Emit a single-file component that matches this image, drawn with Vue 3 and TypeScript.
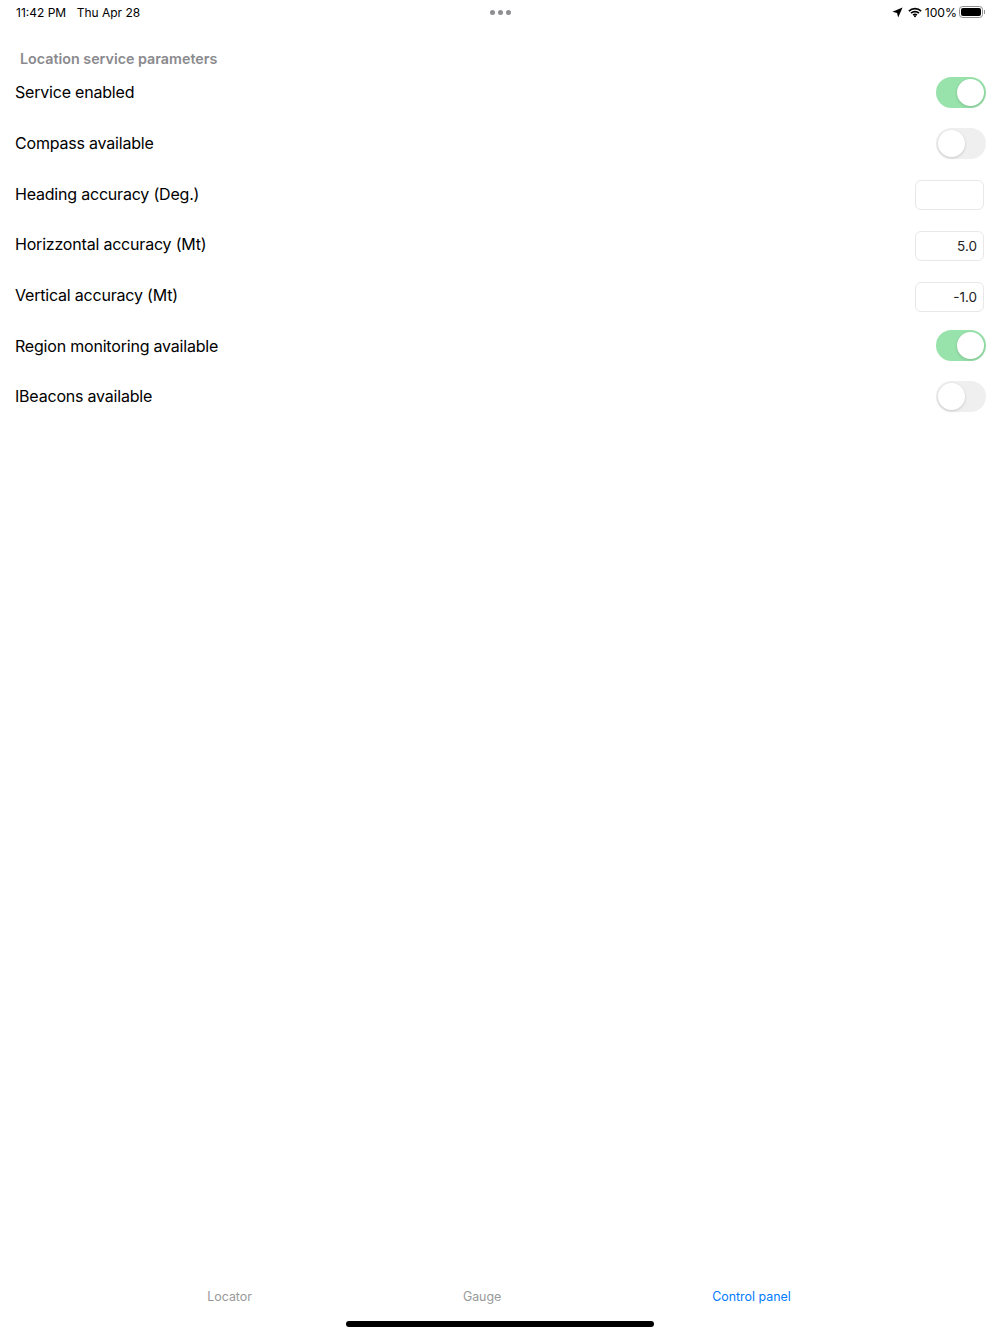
<script setup lang="ts">
type Row = { label: string; kind: 'switch' | 'field'; on?: boolean; value?: string }
const rows: Row[] = [
  { label: 'Service enabled', kind: 'switch', on: true },
  { label: 'Compass available', kind: 'switch', on: false },
  { label: 'Heading accuracy (Deg.)', kind: 'field', value: '' },
  { label: 'Horizzontal accuracy (Mt)', kind: 'field', value: '5.0' },
  { label: 'Vertical accuracy (Mt)', kind: 'field', value: '-1.0' },
  { label: 'Region monitoring available', kind: 'switch', on: true },
  { label: 'IBeacons available', kind: 'switch', on: false },
]
const tabs = ['Locator', 'Gauge', 'Control panel']
</script>

<template>
  <div class="screen">
    <header class="status">
      <div class="status-left">
        <span>11:42 PM</span>
        <span>Thu Apr 28</span>
      </div>
      <div class="dots"><i></i><i></i><i></i></div>
      <div class="status-right">
        <svg class="arrow" width="11" height="11" viewBox="0 0 10 10"><path d="M9.6.4 5.6 9.6 4.6 5.4.4 4.4Z" fill="#000"/></svg>
        <svg class="wifi" width="14" height="11" viewBox="0 0 14 10" fill="none" stroke="#000" stroke-width="1.7">
          <path d="M.9 3.6C4.2.4 9.8.4 13.1 3.6"/>
          <path d="M3 5.7C5.2 3.6 8.8 3.6 11 5.7"/>
          <path d="M5.1 7.7C6.2 6.7 7.8 6.7 8.9 7.7"/>
          <circle cx="7" cy="8.8" r="1" fill="#000" stroke="none"/>
        </svg>
        <span class="pct">100%</span>
        <span class="battery"><b></b></span>
        <span class="nub"></span>
      </div>
    </header>

    <main class="content">
      <h2 class="section">Location service parameters</h2>
      <div v-for="row in rows" :key="row.label" class="row">
        <span class="label">{{ row.label }}</span>
        <span v-if="row.kind === 'switch'" class="switch" :class="{ on: row.on }"><i></i></span>
        <span v-else class="field">{{ row.value }}</span>
      </div>
    </main>

    <nav class="tabs">
      <span v-for="(t, i) in tabs" :key="t" class="tab" :class="{ active: i === 2 }">{{ t }}</span>
    </nav>
    <div class="home-wrap"><div class="home"></div></div>
  </div>
</template>

<style scoped>
.screen {
  width: 1000px;
  height: 1334px;
  display: flex;
  flex-direction: column;
  background: #fff;
  font-family: Inter, "Liberation Sans", sans-serif;
  color: #000;
  overflow: hidden;
}
.status {
  height: 24px;
  display: grid;
  grid-template-columns: 1fr auto 1fr;
  align-items: center;
  padding: 0 15px 0 16px;
  font-size: 12px;
  flex: none;
}
.status-left { display: flex; gap: 10.5px; }
.dots { display: flex; gap: 3px; margin-left: -1px; }
.dots i { width: 5px; height: 5px; border-radius: 50%; background: #8e8e93; }
.status-right { display: flex; align-items: center; justify-content: flex-end; }
.arrow { margin-right: 5px; }
.wifi { margin-right: 3px; }
.pct { margin-right: 2px; font-size: 12.2px; }
.battery {
  width: 24px;
  height: 12px;
  box-sizing: border-box;
  border: 1px solid #8e8e93;
  border-radius: 3.5px;
  padding: 1px;
  display: flex;
}
.battery b { flex: 1; background: #000; border-radius: 2px; }
.nub { width: 1px; height: 4px; background: #8e8e93; margin-left: 1px; }
.content { flex: 1; padding: 24px 16px 0 15px; }
.section {
  margin: 0 0 0 5px;
  height: 19px;
  line-height: 22px;
  font-size: 14.3px;
  font-weight: 600;
  color: #8a8a8e;
}
.row {
  height: 50.7px;
  display: flex;
  align-items: center;
  justify-content: space-between;
}
.label { font-size: 16px; letter-spacing: -0.2px; }
.switch {
  width: 50px;
  height: 31px;
  margin-right: -2px;
  box-sizing: border-box;
  border-radius: 15.5px;
  background: #efefef;
  display: flex;
  padding: 2px;
}
.switch i {
  width: 27px;
  height: 27px;
  border-radius: 50%;
  background: #fff;
  box-shadow: 0 1px 3px rgba(0, 0, 0, 0.16);
}
.switch.on { background: #98e2ab; justify-content: flex-end; }
.field {
  width: 69px;
  height: 30px;
  box-sizing: border-box;
  border: 1px solid #e8e8e8;
  border-radius: 6px;
  padding: 0 6px;
  margin-top: 3px;
  font-size: 13.5px;
  line-height: 28px;
  text-align: right;
  color: #222;
}
.tabs {
  flex: none;
  height: 28px;
  display: flex;
  gap: 211px;
  justify-content: center;
  align-items: center;
  font-size: 12.4px;
  color: #999;
  margin-top: -2px;
  margin-bottom: 2px;
  padding-right: 2px;
}
.tab.active { color: #007aff; }
.home-wrap { flex: none; height: 22px; padding-top: 9px; box-sizing: border-box; display: flex; justify-content: center; }
.home { width: 308px; height: 6px; border-radius: 3px; background: #000; }
</style>
